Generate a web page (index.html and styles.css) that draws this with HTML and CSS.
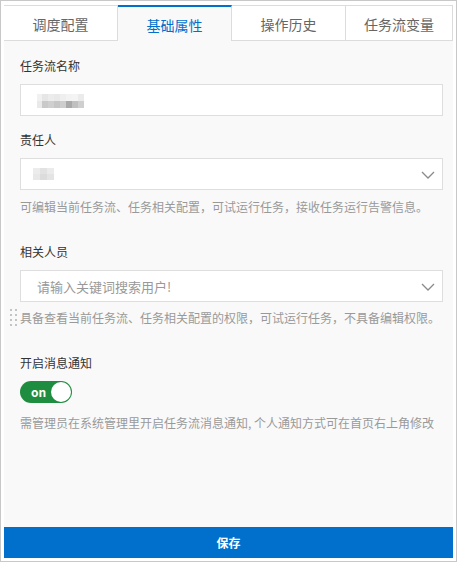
FILE: index.html
```html
<!DOCTYPE html>
<html lang="zh-CN">
<head>
<meta charset="utf-8">
<link rel="stylesheet" href="styles.css">
</head>
<body>
<div class="frame">
  <div class="panel">
    <div class="tabs">
      <div class="tab">调度配置</div>
      <div class="tab active">基础属性</div>
      <div class="tab">操作历史</div>
      <div class="tab last">任务流变量</div>
    </div>
    <div class="form">
      <div class="label first">任务流名称</div>
      <div class="input">
        <svg class="blur blur-name" width="56" height="14" viewBox="0 0 56 14">
          <rect x="0" y="0" width="5" height="7" fill="#f1f1f1"/>
          <rect x="5" y="0" width="6" height="7" fill="#e6e6e6"/>
          <rect x="11" y="0" width="6" height="7" fill="#ececec"/>
          <rect x="17" y="0" width="6" height="7" fill="#e9e9e9"/>
          <rect x="23" y="0" width="6" height="7" fill="#efefef"/>
          <rect x="29" y="0" width="6" height="7" fill="#f3f3f3"/>
          <rect x="35" y="0" width="6" height="7" fill="#f4f4f4"/>
          <rect x="41" y="0" width="6" height="7" fill="#ebebeb"/>
          <rect x="0" y="7" width="5" height="7" fill="#e9e9e9"/>
          <rect x="5" y="7" width="6" height="7" fill="#c9c9c9"/>
          <rect x="11" y="7" width="6" height="7" fill="#cfcfcf"/>
          <rect x="17" y="7" width="6" height="7" fill="#c6c6c6"/>
          <rect x="23" y="7" width="6" height="7" fill="#cdcdcd"/>
          <rect x="29" y="7" width="6" height="7" fill="#a9a9a9"/>
          <rect x="35" y="7" width="6" height="7" fill="#c0c0c0"/>
          <rect x="41" y="7" width="6" height="7" fill="#cfcfcf"/>
        </svg>
      </div>
      <div class="label">责任人</div>
      <div class="input select">
        <svg class="blur" width="21" height="12" viewBox="0 0 21 12">
          <rect x="0" y="0" width="7" height="6" fill="#ececec"/>
          <rect x="7" y="0" width="7" height="6" fill="#e2e2e2"/>
          <rect x="14" y="0" width="7" height="6" fill="#ebebeb"/>
          <rect x="0" y="6" width="7" height="6" fill="#e8e8e8"/>
          <rect x="7" y="6" width="7" height="6" fill="#dcdcdc"/>
          <rect x="14" y="6" width="7" height="6" fill="#e4e4e4"/>
        </svg>
        <svg class="chev" width="14" height="8" viewBox="0 0 14 8"><path d="M1 1 L7 7 L13 1" fill="none" stroke="#8a8a8a" stroke-width="1.3"/></svg>
      </div>
      <div class="help">可编辑当前任务流、任务相关配置，可试运行任务，接收任务运行告警信息。</div>
      <div class="label gap">相关人员</div>
      <div class="input select">
        <span class="placeholder">请输入关键词搜索用户!</span>
        <svg class="chev" width="14" height="8" viewBox="0 0 14 8"><path d="M1 1 L7 7 L13 1" fill="none" stroke="#8a8a8a" stroke-width="1.3"/></svg>
      </div>
      <div class="help help-handle">
        <span class="handle"><i></i><i></i><i></i><i></i><i></i><i></i><i></i><i></i></span>
        具备查看当前任务流、任务相关配置的权限，可试运行任务，不具备编辑权限。
      </div>
      <div class="label gap2">开启消息通知</div>
      <div class="toggle"><span class="on">on</span><span class="knob"></span></div>
      <div class="help notify">需管理员在系统管理里开启任务流消息通知, 个人通知方式可在首页右上角修改</div>
    </div>
    <div class="save">保存</div>
  </div>
</div>
</body>
</html>
```
FILE: styles.css
```css
* { box-sizing: border-box; }
html, body { margin: 0; padding: 0; background: #fff; }
body {
  font-family: "Microsoft YaHei", "Noto Sans CJK SC", "Noto Sans", sans-serif;
  font-size: 12px;
  color: #333;
}
.frame {
  width: 457px;
  height: 562px;
  border: 1px solid #c8c8c8;
  padding: 4px 3px 3px 3px;
  background: #fff;
}
.panel {
  height: 100%;
  background: #f9f9f9;
  display: flex;
  flex-direction: column;
}
.tabs {
  display: flex;
  height: 36px;
  flex: none;
}
.tab {
  flex: 0 0 114px;
  background: #fff;
  border-top: 1px solid #dcdcdc;
  border-right: 1px solid #dcdcdc;
  border-bottom: 1px solid #dcdcdc;
  color: #666;
  font-size: 14px;
  display: flex;
  align-items: center;
  justify-content: center;
  padding-top: 1px;
}
.tab.last { flex: 1 1 auto; }
.tab.active {
  background: #f9f9f9;
  color: #0070cc;
  border-top: 2px solid #0070cc;
  border-bottom: none;
  border-right: 1px solid #dcdcdc;
}
.form {
  padding: 0 10px 0 16px;
  flex: 1;
  display: flex;
  flex-direction: column;
}
.label {
  line-height: 18px;
  height: 18px;
  margin-top: 15px;
  margin-bottom: 9px;
  color: #333;
}
.label.first { margin-top: 16px; }
.label.gap { margin-top: 27px; }
.label.gap2 { margin-top: 27px; margin-bottom: 9px; }
.input {
  height: 32px;
  background: #fff;
  border: 1px solid #dedede;
  display: flex;
  align-items: center;
  position: relative;
  padding: 0 12px;
  flex: none;
}
.blur { display: block; }
.blur-name { margin-left: 4px; margin-top: 1px; }
.placeholder { color: #999; font-size: 13px; margin-left: 4px; }
.chev { position: absolute; right: 7px; top: 12px; }
.help {
  color: #999;
  line-height: 18px;
  margin-top: 8px;
  white-space: nowrap;
  position: relative;
}
.help-handle { margin-top: 7px; }
.handle {
  position: absolute;
  left: -10px;
  top: 0;
  width: 7px;
  display: grid;
  grid-template-columns: 2px 2px;
  column-gap: 3px;
  row-gap: 3px;
}
.handle i {
  display: block;
  width: 2px;
  height: 2px;
  background: #c4c4c4;
}
.toggle {
  width: 52px;
  height: 22px;
  border-radius: 11px;
  background: #1f8d3f;
  position: relative;
  flex: none;
}
.toggle .on {
  position: absolute;
  left: 11px;
  top: 0;
  line-height: 22px;
  color: #fff;
  font-weight: bold;
  font-size: 12px;
}
.toggle .knob {
  position: absolute;
  right: 1px;
  top: 1px;
  width: 20px;
  height: 20px;
  border-radius: 50%;
  background: #fff;
}
.notify { margin-top: 11px; }
.save {
  flex: none;
  height: 31px;
  background: #0070cc;
  color: #fff;
  font-weight: bold;
  font-size: 12px;
  display: flex;
  align-items: center;
  justify-content: center;
}
```
